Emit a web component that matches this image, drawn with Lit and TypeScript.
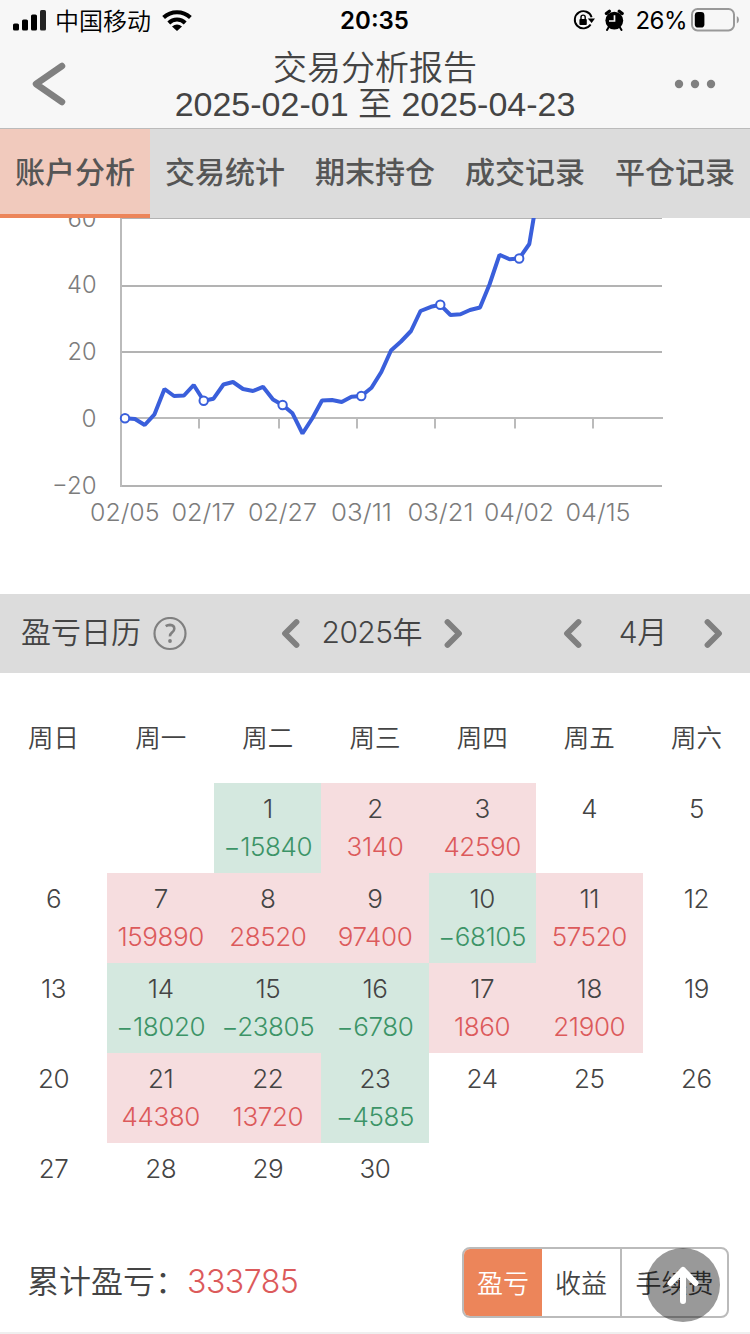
import { LitElement, html, css, svg, nothing } from "lit";
import { customElement, state } from "lit/decorators.js";
import { classMap } from "lit/directives/class-map.js";

const TABS = ["账户分析", "交易统计", "期末持仓", "成交记录", "平仓记录"];
const WEEKDAYS = ["周日", "周一", "周二", "周三", "周四", "周五", "周六"];
const MODES = ["盈亏", "收益", "手续费"];

// Daily profit and loss for April 2025, keyed by day of month.
const PROFIT: Record<number, number> = {
  1: -15840, 2: 3140, 3: 42590,
  7: 159890, 8: 28520, 9: 97400, 10: -68105, 11: 57520,
  14: -18020, 15: -23805, 16: -6780, 17: 1860, 18: 21900,
  21: 44380, 22: 13720, 23: -4585,
};
const FIRST_WEEKDAY = 2;
const DAYS = 30;

const LINE: [number, number][] = [
  [125, 418.3], [135, 419], [144.7, 425], [154.5, 414.3], [164.5, 389], [174, 396], [184, 395.5],
  [193.7, 385], [203.7, 400.8], [213.5, 398.7], [223.5, 384.5], [233, 382], [243, 389], [253, 391],
  [263, 386.8], [273, 399.5], [282.6, 405], [292.5, 413.3], [302.5, 433.5], [312.5, 418], [322, 400.5],
  [332, 400], [341.7, 402], [351.5, 396.7], [361.3, 396], [371.5, 387.8], [381.3, 372], [391, 350.5],
  [401, 341.5], [411, 331], [420.5, 311], [431, 306.8], [440.3, 304.8], [450.5, 315], [460.5, 314.3],
  [470, 310], [480, 307.5], [489.5, 284.5], [499.5, 254.8], [509.5, 259.3], [519.2, 258.5],
  [529.3, 244], [534.5, 213], [537, 195],
];
const MARKERS = [0, 8, 16, 24, 32, 40];

const chevron = (dir: "left" | "right") => html`
  <svg class="chevron" width="20" height="32" viewBox="0 0 20 32">
    <path d=${dir === "left" ? "M15.500 4L4 15.500L15.500 27" : "M4.500 4L16 15.500L4.500 27"} />
  </svg>`;

@customElement("status-bar")
class StatusBar extends LitElement {
  static styles = css`
    :host { display: grid; grid-template-columns: 1fr auto 1fr; align-items: center; height: 40px; padding: 0 12px 0 13px; color: #000;
      font-family: Inter, "Noto Sans CJK SC", sans-serif; font-size: 24px; }
    .left, .right { display: flex; align-items: center; }
    .right { justify-content: flex-end; }
    .carrier { margin: 0 10px 0 9px; padding-top: 3px; line-height: 34px; font-weight: 350; }
    .time { font-weight: 600; font-size: 24px; padding-right: 2px; padding-top: 1px; }
    .pct { letter-spacing: -0.5px; margin: 0 4px 0 10px; padding-top: 1px; }
    .alarm { margin-left: 9px; }
    .battery { overflow: visible; }
  `;
  render() {
    return html`
      <div class="left">
        <svg width="33" height="22" viewBox="0 0 33 22">
          <rect x="0" y="14.500" width="6" height="7" rx="1.6" />
          <rect x="9" y="10.500" width="6" height="11" rx="1.6" />
          <rect x="18" y="5.500" width="6" height="16" rx="1.6" />
          <rect x="27" y="1" width="6" height="20.5" rx="1.6" fill="#222" />
        </svg>
        <span class="carrier">中国移动</span>
        <svg width="32" height="24" viewBox="0 0 32 24" fill="none" stroke="#000" stroke-width="4">
          <path d="M2.600 9.500A19.500 19.500 0 0 1 29.400 9.500" />
          <path d="M7.800 15A11.500 11.500 0 0 1 24.200 15" />
          <path d="M16 23L11 18.500Q16 14.600 21 18.500Z" fill="#000" stroke="none" />
        </svg>
      </div>
      <span class="time">20:35</span>
      <div class="right">
        <svg width="22" height="22" viewBox="0 0 22 22">
          <path d="M17.600 15.500A8.600 8.600 0 1 1 18.600 8.200" fill="none" stroke="#000" stroke-width="1.9" />
          <path d="M14.800 9.500H22L18.600 14Z" />
          <rect x="6.4" y="10" width="7.4" height="6" rx="1" />
          <path d="M8 10.5V8.2A2.1 2.1 0 0 1 12.2 8.2V10.5" fill="none" stroke="#000" stroke-width="1.4" />
        </svg>
        <svg class="alarm" width="21" height="22" viewBox="0 0 21 22">
          <circle cx="10.3" cy="11.6" r="8.9" />
          <path d="M2.400 4.600L5.400 2.200M18.200 4.600L15.200 2.200" stroke="#000" stroke-width="3.2" stroke-linecap="round" />
          <path d="M4.5 18.5L3 21M16 18.5L17.5 21" stroke="#000" stroke-width="2" stroke-linecap="round" />
          <path d="M10.5 6.2V12H5" fill="none" stroke="#f7f7f7" stroke-width="1.7" />
        </svg>
        <span class="pct">26%</span>
        <svg class="battery" width="47" height="24" viewBox="0 0 47 24">
          <rect x="1" y="1" width="42" height="21.4" rx="5.5" fill="none" stroke="#999" stroke-width="2" />
          <rect x="3.8" y="4" width="9.6" height="15.6" rx="3.4" />
          <path d="M45.800 8Q48 9 48 11.800Q48 14.600 45.800 15.600Z" fill="#999" />
        </svg>
      </div>`;
  }
}

@customElement("equity-chart")
class EquityChart extends LitElement {
  static styles = css`
    :host { display: block; height: 376px; background: #fff; }
    .plot { display: block; }
    .label { font-family: Inter, sans-serif; font-size: 24px; font-weight: 340; fill: #7c7c7c; }
    .grid { stroke: #b3b3b3; stroke-width: 2; }
    .axis { stroke: #bbb; stroke-width: 2; }
    .line { fill: none; stroke: #3a5fdb; stroke-width: 4; stroke-linejoin: bevel; }
    .marker { fill: #fff; stroke: #3a5fdb; stroke-width: 2; }
  `;
  render() {
    const yLabels: [string, number, number, number][] = [
      ["60", 226.5, 67.5, 29], ["40", 293.3, 67, 29.5], ["20", 360, 67.5, 29], ["0", 426.5, 81.5, 15], ["−20", 493.5, 52, 44.5],
    ];
    const xLabels: [string, number, number][] = [
      ["02/05", 90, 69.5], ["02/17", 171.5, 64], ["02/27", 248, 69], ["03/11", 331, 61],
      ["03/21", 407.5, 66], ["04/02", 484, 70], ["04/15", 565.5, 65],
    ];
    return html`
      <svg class="plot" width="750" height="376" viewBox="0 218 750 376">
        ${[218, 286, 352, 486].map((y) => svg`<path class="grid" d="M121 ${y}H662" />`)}
        <path class="axis" d="M121 218V487M121 418H663" />
        ${[199, 279, 357, 435, 515, 593].map((x) => svg`<path class="axis" d="M${x} 419V428.5" />`)}
        <polyline class="line" points=${LINE.map((p) => p.join(",")).join(" ")} />
        ${MARKERS.map((i) => svg`<circle class="marker" cx=${LINE[i][0]} cy=${LINE[i][1]} r="4.2" />`)}
        ${yLabels.map(([t, y, x, w]) => svg`<text class="label" x=${x} y=${y} textLength=${w} lengthAdjust="spacingAndGlyphs">${t}</text>`)}
        ${xLabels.map(([t, x, w]) => svg`<text class="label" x=${x} y="521" textLength=${w} lengthAdjust="spacingAndGlyphs">${t}</text>`)}
      </svg>`;
  }
}

@customElement("profit-calendar")
class ProfitCalendar extends LitElement {
  static styles = css`
    :host { display: block; background: #fff; color: #444; font-family: Inter, "Noto Sans CJK SC", sans-serif; }
    .bar { display: grid; grid-template-columns: 188px 93px 182px 100px 160px; align-items: center; height: 79px; background: #dcdcdc; font-size: 30px; }
    .name { display: flex; align-items: center; gap: 12px; padding-left: 21px; white-space: nowrap; font-weight: 350; line-height: 40px; }
    .name span, .value { padding-bottom: 3px; }
    .help { flex: none; }
    .picker { display: flex; align-items: center; justify-content: space-between; line-height: 40px; white-space: nowrap; }
    .year { grid-column: 3; }
    .month { grid-column: 5; }
    .value { display: inline-flex; align-items: center; font-weight: 350; }
    .num { letter-spacing: -0.6px; }
    .chevron { fill: none; stroke: #808080; stroke-width: 5.8; stroke-linecap: round; stroke-linejoin: round; }
    .week { display: grid; grid-template-columns: repeat(7, 1fr); box-sizing: border-box; height: 110px; align-items: center; padding-top: 15px; font-size: 25.5px; font-weight: 350; text-align: center; }
    .days { display: grid; grid-template-columns: repeat(7, 1fr); grid-auto-rows: 90px; }
    .day { display: flex; flex-direction: column; align-items: center; padding-top: 7px; font-size: 26px; line-height: 38px; font-weight: 340; letter-spacing: -0.4px; }
    .up { background: #f6dddf; }
    .down { background: #d4e8df; }
    .up .amount { color: #dc5a5b; }
    .down .amount { color: #3c9467; }
  `;
  render() {
    const days = Array.from({ length: DAYS }, (_, i) => i + 1);
    return html`
      <div class="bar">
        <div class="name"><span>盈亏日历</span>
          <svg class="help" width="34" height="34" viewBox="0 0 34 34" fill="none" stroke="#808080">
            <circle cx="17" cy="16.500" r="15.500" stroke-width="2.2" />
            <path d="M12.700 9.200Q14.700 7.900 17 7.900Q21.300 8.100 21.300 11.700Q21.300 13.900 18.900 15.600Q16.800 17.200 17 19.400" stroke-width="2.6" />
            <circle cx="17" cy="24" r="1.9" fill="#808080" stroke="none" />
          </svg>
        </div>
        <div class="picker year">${chevron("left")}<span class="value"><span class="num">2025</span>年</span>${chevron("right")}</div>
        <div class="picker month">${chevron("left")}<span class="value"><span class="num">4</span>月</span>${chevron("right")}</div>
      </div>
      <div class="week">${WEEKDAYS.map((d) => html`<span>${d}</span>`)}</div>
      <div class="days">
        ${Array.from({ length: FIRST_WEEKDAY }, () => html`<div></div>`)}
        ${days.map((d) => {
          const v = PROFIT[d];
          return html`<div class=${classMap({ day: true, up: v > 0, down: v < 0 })}>
            <span>${d}</span>
            ${v === undefined ? nothing : html`<span class="amount">${String(v).replace("-", "−")}</span>`}
          </div>`;
        })}
      </div>`;
  }
}

@customElement("app-root")
class AppRoot extends LitElement {
  @state() private tab = 0;
  @state() private mode = 0;

  static styles = css`
    :host { display: block; position: relative; width: 750px; height: 1334px; overflow: hidden; background: #fff; color: #444;
      font-family: Inter, "Noto Sans CJK SC", sans-serif; }
    .top { height: 128px; background: #f7f7f7; border-bottom: 1px solid #bbb; }
    .nav { display: grid; grid-template-columns: 100px 1fr 100px; align-items: center; height: 88px; }
    .back { margin-left: 29px; }
    .more { margin-left: 24px; }
    .title { text-align: center; font-family: "Liberation Sans", "Noto Sans CJK SC", sans-serif; font-size: 34px; line-height: 36px; font-weight: 350; padding-top: 3px; }
    .title div { white-space: nowrap; }
    .tabs { display: grid; grid-template-columns: repeat(5, 150px); height: 89px; background: #dcdcdc; }
    .tab { display: flex; align-items: center; justify-content: center; font-size: 30px; font-weight: 500; color: #555; padding-bottom: 4px; border-bottom: 4px solid transparent; }
    .tab.on { background: #f1cabd; border-color: #ec855a; }
    .footer { display: flex; align-items: center; justify-content: space-between; height: 71px; margin-top: 14px; padding: 0 21px 0 27px; }
    .sum { display: flex; align-items: center; font-size: 32px; font-weight: 350; line-height: 44px; padding-bottom: 2px; }
    .total { color: #dc5a5b; letter-spacing: -0.5px; }
    .modes { box-sizing: border-box; display: grid; grid-template-columns: 78px 78px 107px; width: 267px; height: 71px; border: 2px solid #bbb; border-radius: 8px; overflow: hidden; }
    .mode { display: flex; align-items: center; justify-content: center; padding-bottom: 3px; font-size: 26px; font-weight: 350; color: #444; }
    .mode + .mode + .mode { border-left: 2px solid #bbb; }
    .mode.on { background: #ec855a; color: #fff; }
    .rule { height: 2px; margin-top: 14px; background: #efefef; }
    .to-top { position: absolute; left: 646px; top: 1248px; width: 74px; height: 74px; }
  `;

  render() {
    return html`
      <header class="top">
        <status-bar></status-bar>
        <div class="nav">
          <svg class="back" width="38" height="44" viewBox="0 0 38 44">
            <path d="M33 4L7 22L33 40" fill="none" stroke="#808080" stroke-width="6.5" stroke-linecap="round" stroke-linejoin="round" />
          </svg>
          <div class="title">
            <div>交易分析报告</div>
            <div>2025-02-01 至 2025-04-23</div>
          </div>
          <svg class="more" width="42" height="10" viewBox="0 0 42 10" fill="#808080">
            <circle cx="5" cy="5" r="4.2" /><circle cx="21" cy="5" r="4.2" /><circle cx="37" cy="5" r="4.2" />
          </svg>
        </div>
      </header>
      <nav class="tabs">
        ${TABS.map((t, i) => html`<div class=${classMap({ tab: true, on: i === this.tab })} @click=${() => (this.tab = i)}>${t}</div>`)}
      </nav>
      <equity-chart></equity-chart>
      <profit-calendar></profit-calendar>
      <footer class="footer">
        <div class="sum">累计盈亏：<span class="total">333785</span></div>
        <div class="modes">
          ${MODES.map((m, i) => html`<div class=${classMap({ mode: true, on: i === this.mode })} @click=${() => (this.mode = i)}>${m}</div>`)}
        </div>
      </footer>
      <div class="rule"></div>
      <svg class="to-top" viewBox="0 0 74 74">
        <circle cx="37" cy="37" r="37" fill="rgba(0,0,0,.4)" />
        <path d="M37 53V22M24.500 35L37 22L49.500 35" fill="none" stroke="#fff" stroke-width="6" stroke-linecap="round" stroke-linejoin="round" />
      </svg>`;
  }
}
